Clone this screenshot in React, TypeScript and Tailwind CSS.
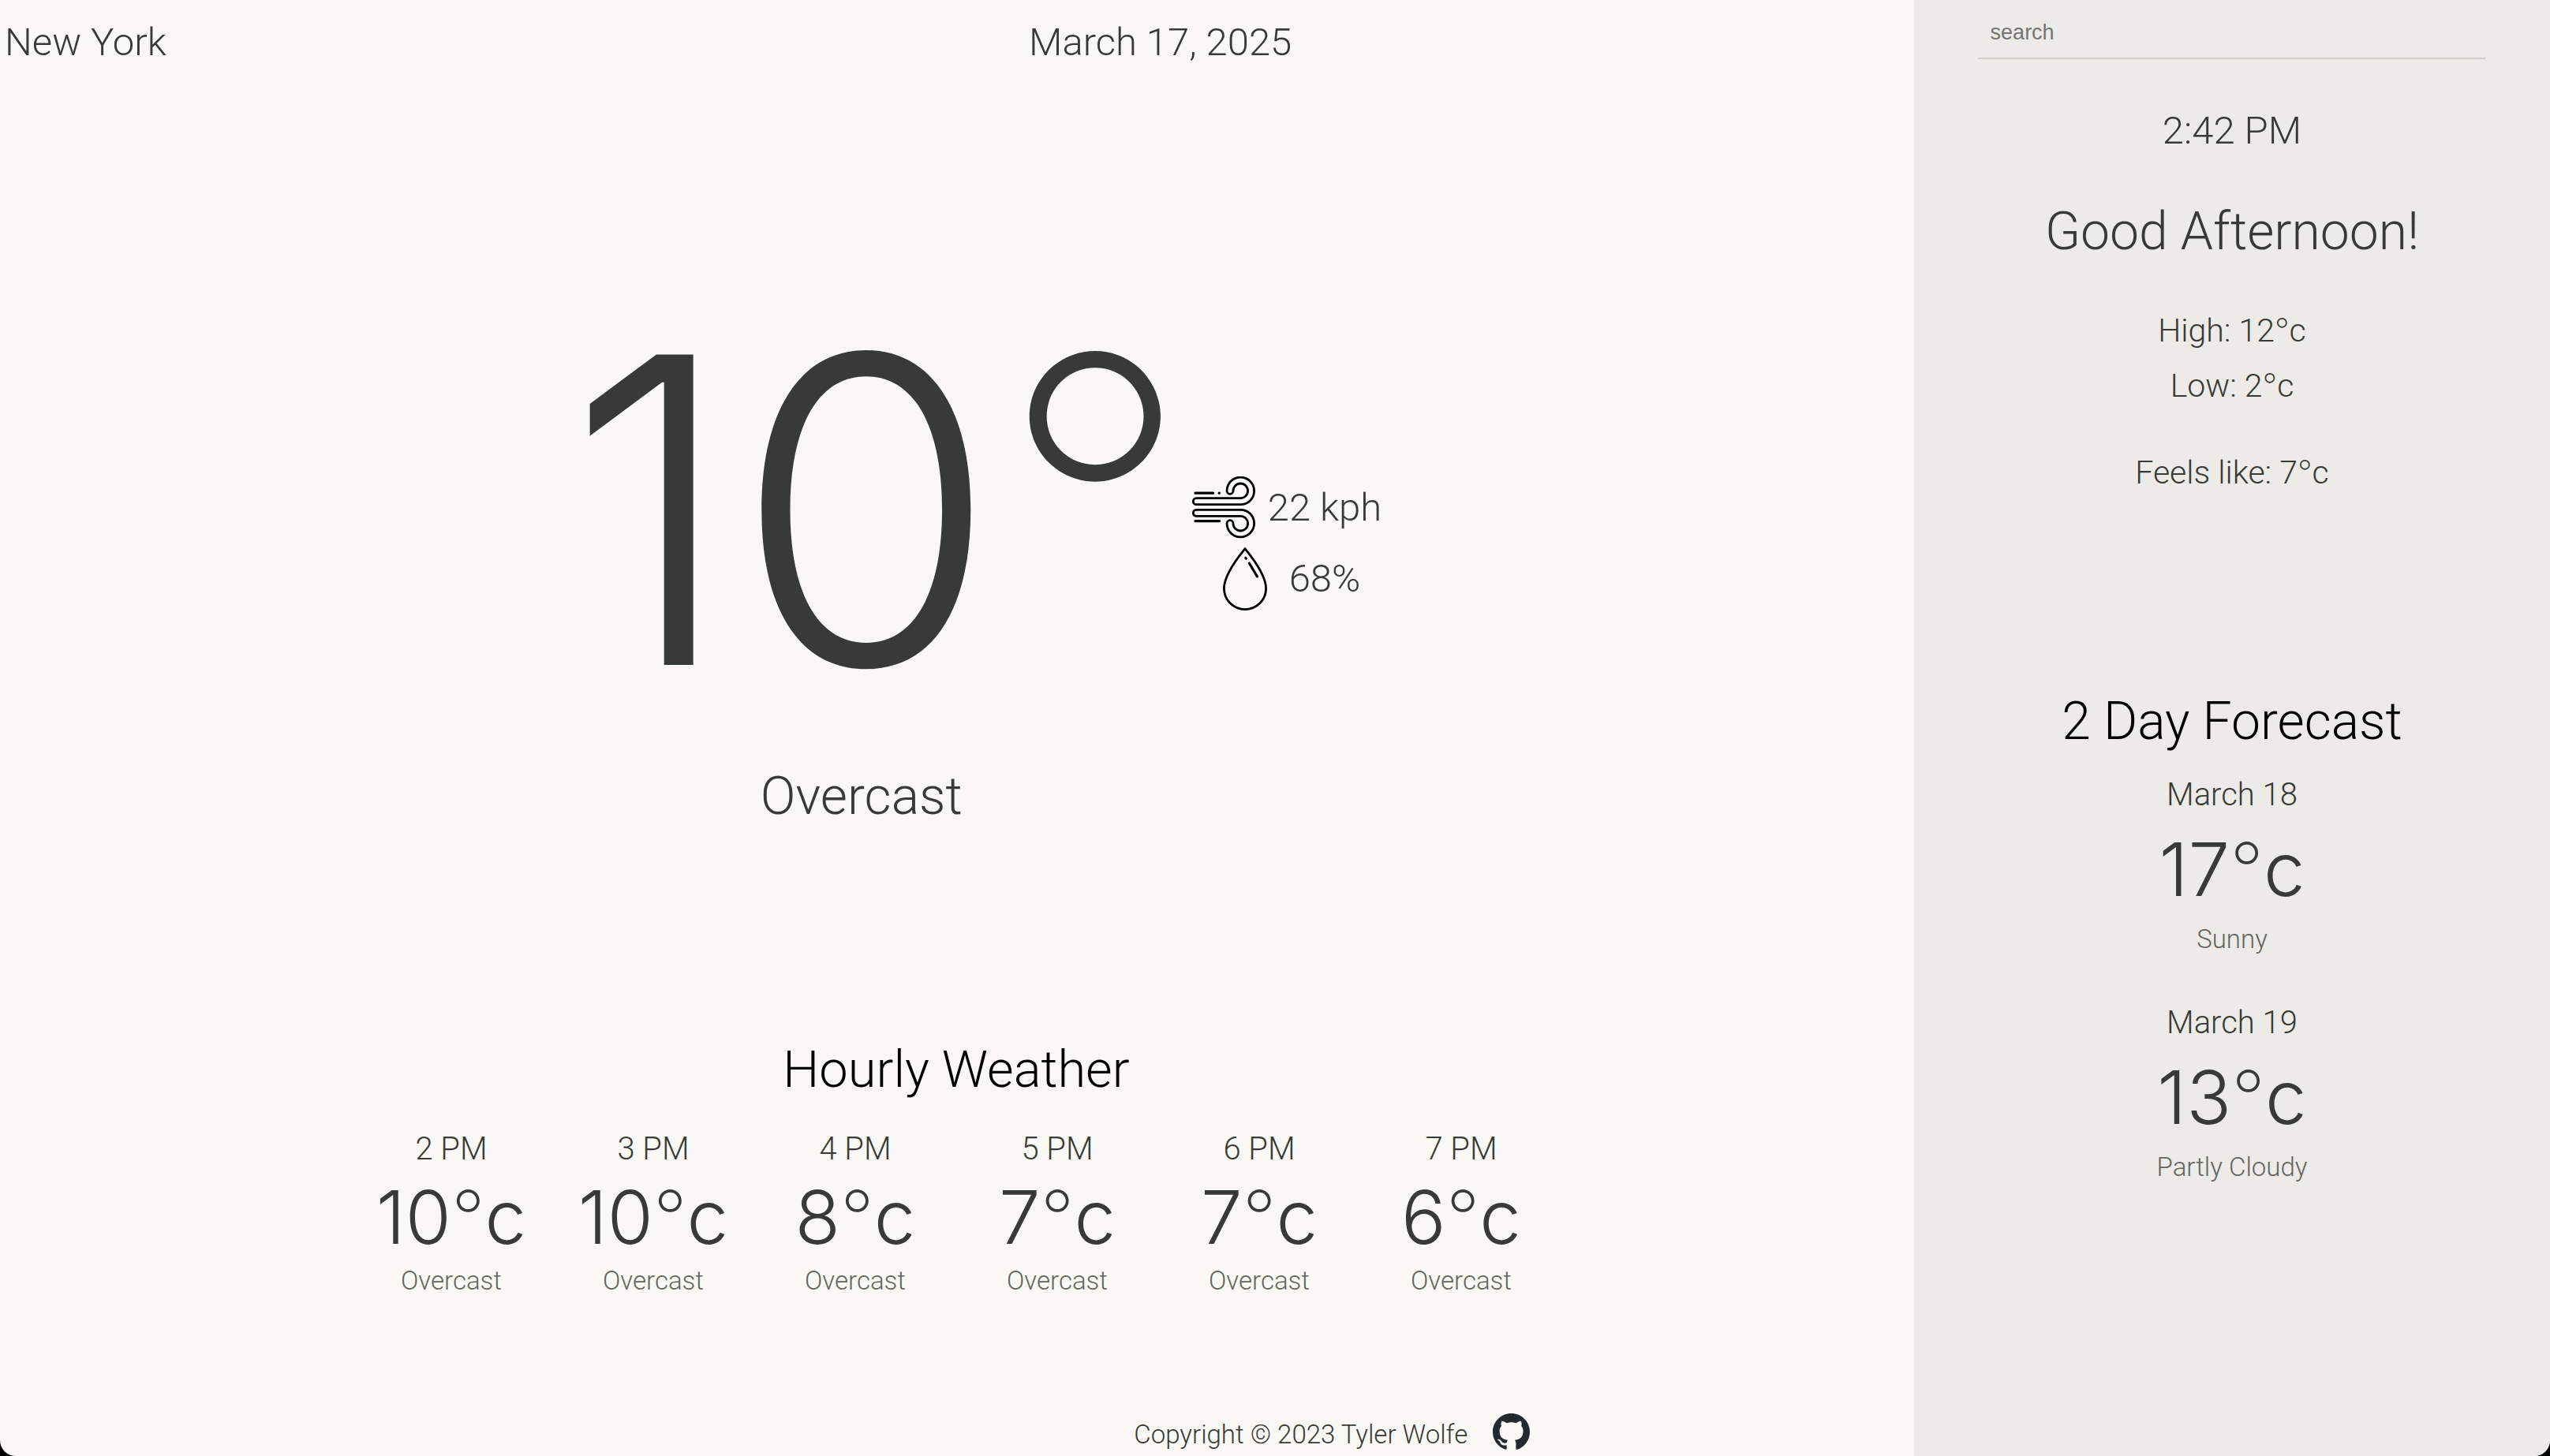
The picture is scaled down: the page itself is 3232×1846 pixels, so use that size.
type Reading = { label: string; degrees: number; condition: string };

const hourly: Reading[] = [
  { label: "2 PM", degrees: 10, condition: "Overcast" },
  { label: "3 PM", degrees: 10, condition: "Overcast" },
  { label: "4 PM", degrees: 8, condition: "Overcast" },
  { label: "5 PM", degrees: 7, condition: "Overcast" },
  { label: "6 PM", degrees: 7, condition: "Overcast" },
  { label: "7 PM", degrees: 6, condition: "Overcast" },
];

const daily: Reading[] = [
  { label: "March 18", degrees: 17, condition: "Sunny" },
  { label: "March 19", degrees: 13, condition: "Partly Cloudy" },
];

function Temp({ value, unit = "c" }: { value: number; unit?: string }) {
  return (
    <>
      {value}
      <span className="font-['Inter'] leading-none font-extralight">°</span>
      {unit}
    </>
  );
}

function WindIcon() {
  return (
    <svg viewBox="0 0 80 80" className="size-20" fill="none" stroke="#000" strokeWidth="2.8" strokeLinecap="round" strokeLinejoin="round" aria-hidden="true">
      <path d="M5.4 27.6H61.3A9.3 9.3 0 1 0 52 18.3A4 4 0 0 1 44 18.3A17.3 17.3 0 1 1 61.3 35.7H5.4A4 4 0 0 1 5.4 27.6Z" />
      <path d="M5.4 50.4H61.3A9.3 9.3 0 1 1 52 59.7A4 4 0 0 0 44 59.7A17.3 17.3 0 1 0 61.3 42.3H5.4A4 4 0 0 0 5.4 50.4Z" />
      <path d="M4 21.2H26.6M34.2 21.2H34.4M4 56.6H34.6" strokeWidth="3.2" />
    </svg>
  );
}

function DropIcon() {
  return (
    <svg viewBox="0 0 80 80" className="size-20" fill="none" stroke="#000" strokeWidth="2.8" strokeLinecap="round" strokeLinejoin="round" aria-hidden="true">
      <path d="M40 1.6C34 9 13.4 34 13.4 52A26.6 26.6 0 0 0 66.6 52C66.6 34 46 9 40 1.6Z" />
      <path d="M40.8 13.4L41.3 14.1M45.3 20L55.5 37" strokeWidth="3.2" />
    </svg>
  );
}

function GithubIcon() {
  return (
    <svg viewBox="0 0 16 16" className="size-[47px]" fill="#24292f" aria-hidden="true">
      <path d="M8 0C3.58 0 0 3.58 0 8c0 3.54 2.29 6.53 5.47 7.59.4.07.55-.17.55-.38 0-.19-.01-.82-.01-1.49-2.01.37-2.53-.49-2.69-.94-.09-.23-.48-.94-.82-1.13-.28-.15-.68-.52-.01-.53.63-.01 1.08.58 1.23.82.72 1.21 1.87.87 2.33.66.07-.52.28-.87.51-1.07-1.78-.2-3.64-.89-3.64-3.95 0-.87.31-1.59.82-2.15-.08-.2-.36-1.02.08-2.12 0 0 .67-.21 2.2.82.64-.18 1.32-.27 2-.27.68 0 1.36.09 2 .27 1.53-1.04 2.2-.82 2.2-.82.44 1.1.16 1.92.08 2.12.51.56.82 1.27.82 2.15 0 3.07-1.87 3.75-3.65 3.95.29.25.54.73.54 1.48 0 1.07-.01 1.93-.01 2.2 0 .21.15.46.55.38A8.013 8.013 0 0 0 16 8c0-4.42-3.58-8-8-8z" />
    </svg>
  );
}

function ReadingCard({ reading, className }: { reading: Reading; className: string }) {
  return (
    <li className={`flex flex-col items-center ${className}`}>
      <p className="text-[40px] leading-[50px]">{reading.label}</p>
      <p className="font-['Inter'] text-[94px] leading-[110px] font-light">
        <Temp value={reading.degrees} />
      </p>
      <p className="text-[33px] leading-10 text-[#636561]">{reading.condition}</p>
    </li>
  );
}

export default function App() {
  return (
    <div className="min-h-screen bg-black">
      <div className="flex min-h-screen overflow-hidden rounded-b-[20px] bg-[#f9f8f4] font-['Roboto',sans-serif] font-[350] text-[#383a36]">
        <main className="flex w-3/4 flex-col">
          <header className="grid grid-cols-2 pt-6 text-[49px] leading-[60px]">
            <p className="pl-1.5">New York</p>
            <p className="pl-[92px]">March 17, 2025</p>
          </header>

          <section className="mt-[292px] flex justify-center">
            <div className="min-w-[838px]">
              <h1 className="text-right font-['Inter'] text-[541px] leading-none font-light">
                <Temp value={10} unit="" />
              </h1>
              <p className="mt-[53px] text-center text-[66px] leading-[80px]">Overcast</p>
            </div>
            <ul className="mt-[228px] flex flex-col items-center gap-2.5 text-[49px]">
              <li className="flex items-center gap-4">
                <WindIcon />
                22 kph
              </li>
              <li className="flex items-center gap-4">
                <DropIcon />
                68%
              </li>
            </ul>
          </section>

          <section className="mt-[266px]">
            <h2 className="text-center text-[65px] leading-[80px] text-black">Hourly Weather</h2>
            <ul className="mt-9 flex justify-center">
              {hourly.map((reading) => (
                <ReadingCard key={reading.label} reading={reading} className="w-64 gap-1.5" />
              ))}
            </ul>
          </section>

          <footer className="mt-auto flex items-end justify-end gap-8 pr-[20%] pb-[7px]">
            <p className="text-[33px] leading-10">Copyright © 2023 Tyler Wolfe</p>
            <a href="#github" aria-label="GitHub">
              <GithubIcon />
            </a>
          </footer>
        </main>

        <aside className="flex w-1/4 flex-col items-center border-l-2 border-[#f9f8f4] bg-[#ecebe7]">
          <input
            type="text"
            aria-label="search"
            placeholder="search"
            className="w-4/5 border-b-2 border-[#d0cfc9] bg-transparent px-4 pt-[26px] pb-[17px] font-['Liberation_Sans',sans-serif] text-[27px] leading-[30px] font-normal outline-none placeholder:text-[#757575]"
          />
          <p className="mt-[61px] text-[49px] leading-[60px]">2:42 PM</p>
          <h2 className="mt-[58px] text-[66px] leading-[80px]">Good Afternoon!</h2>
          <div className="mt-[50px] text-center text-[41px] leading-[70px]">
            <p>
              High: <Temp value={12} />
            </p>
            <p>
              Low: <Temp value={2} />
            </p>
            <p className="mt-10">
              Feels like: <Temp value={7} />
            </p>
          </div>
          <h2 className="mt-[241px] text-[66px] leading-[80px] text-black">2 Day Forecast</h2>
          <ul className="mt-7 flex flex-col gap-[61px]">
            {daily.map((reading) => (
              <ReadingCard key={reading.label} reading={reading} className="gap-3.5" />
            ))}
          </ul>
        </aside>
      </div>
    </div>
  );
}
